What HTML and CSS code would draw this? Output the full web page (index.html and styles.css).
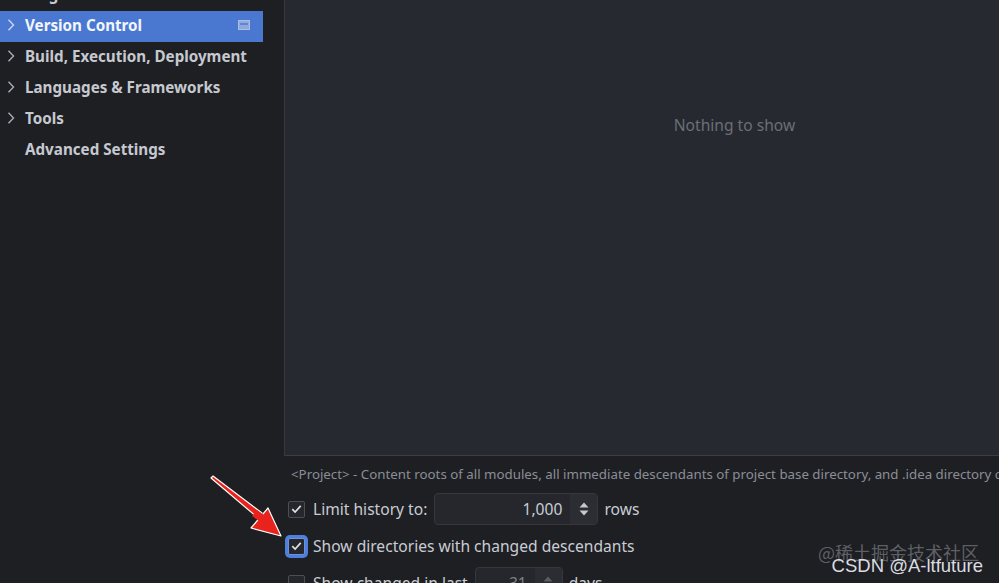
FILE: index.html
```html
<!DOCTYPE html>
<html>
<head>
<meta charset="utf-8">
<link rel="stylesheet" href="styles.css">
</head>
<body>
<div class="app">
  <aside class="sidebar">
    <ul class="tree">
      <li class="row"><span class="chev"></span><span class="label">Plugins</span></li>
      <li class="row selected">
        <svg class="chev" viewBox="0 0 8 14" width="8" height="14"><path d="M1.5 1.8l5 5.2-5 5.2" fill="none" stroke="#c8d6f2" stroke-width="1.4"/></svg>
        <span class="label">Version Control</span>
        <svg class="proj" viewBox="0 0 12 10" width="12" height="10"><rect x="0.5" y="0.5" width="11" height="9" fill="#8fa9de" stroke="#a9bde6"/><rect x="2" y="3" width="8" height="2" fill="#5f86d4"/></svg>
      </li>
      <li class="row">
        <svg class="chev" viewBox="0 0 8 14" width="8" height="14"><path d="M1.5 1.8l5 5.2-5 5.2" fill="none" stroke="#a9adb5" stroke-width="1.4"/></svg>
        <span class="label">Build, Execution, Deployment</span>
      </li>
      <li class="row">
        <svg class="chev" viewBox="0 0 8 14" width="8" height="14"><path d="M1.5 1.8l5 5.2-5 5.2" fill="none" stroke="#a9adb5" stroke-width="1.4"/></svg>
        <span class="label">Languages &amp; Frameworks</span>
      </li>
      <li class="row">
        <svg class="chev" viewBox="0 0 8 14" width="8" height="14"><path d="M1.5 1.8l5 5.2-5 5.2" fill="none" stroke="#a9adb5" stroke-width="1.4"/></svg>
        <span class="label">Tools</span>
      </li>
      <li class="row"><span class="chev"></span><span class="label">Advanced Settings</span></li>
    </ul>
  </aside>
  <main class="main">
    <section class="panel">
      <p class="empty">Nothing to show</p>
    </section>
    <div class="options">
      <p class="desc">&lt;Project&gt; - Content roots of all modules, all immediate descendants of project base directory, and .idea directory contents</p>
      <div class="opt">
        <span class="cb checked">
          <svg viewBox="0 0 16 16" width="16" height="16"><path d="M3.5 8.2l3 3 6-6.5" fill="none" stroke="#dfe1e5" stroke-width="1.8"/></svg>
        </span>
        <span class="opt-label">Limit history to:</span>
        <span class="spin">
          <span class="spin-val">1,000</span>
          <span class="spin-btn">
            <svg viewBox="0 0 12 18" width="12" height="18"><path d="M1.5 7.5L6 2.5l4.5 5z" fill="#c5c8ce"/><path d="M1.5 10.5L6 15.5l4.5-5z" fill="#c5c8ce"/></svg>
          </span>
        </span>
        <span class="opt-label unit">rows</span>
      </div>
      <div class="opt">
        <span class="cb checked focused">
          <svg viewBox="0 0 16 16" width="16" height="16"><path d="M3.5 8.2l3 3 6-6.5" fill="none" stroke="#dfe1e5" stroke-width="1.8"/></svg>
        </span>
        <span class="opt-label">Show directories with changed descendants</span>
      </div>
      <div class="opt">
        <span class="cb"></span>
        <span class="opt-label">Show changed in last</span>
        <span class="spin small">
          <span class="spin-val">31</span>
          <span class="spin-btn">
            <svg viewBox="0 0 12 18" width="12" height="18"><path d="M1.5 7.5L6 2.5l4.5 5z" fill="#5a5d63"/><path d="M1.5 10.5L6 15.5l4.5-5z" fill="#5a5d63"/></svg>
          </span>
        </span>
        <span class="opt-label unit">days</span>
      </div>
    </div>
  </main>
</div>

<svg class="arrow" viewBox="0 0 100 80" width="100" height="80">
  <path d="M13 16 L62 53 L58 58 L11 18 Z" fill="#e8231d" stroke="#ffffff" stroke-width="1.2" stroke-linejoin="round"/>
  <path d="M81 76 L51 68 L68 48 Z" fill="#e8231d" stroke="#ffffff" stroke-width="1.2" stroke-linejoin="round"/>
  <path d="M57 50 L64 55 L59 61 L52 56 Z" fill="#e8231d"/>
</svg>

<div class="watermark">
  <span class="wm-juejin">@稀土掘金技术社区</span>
  <span class="wm-csdn">CSDN @A-ltfuture</span>
</div>
</body>
</html>
```

FILE: styles.css
```css
* { box-sizing: border-box; }
html, body {
  margin: 0;
  padding: 0;
  width: 999px;
  height: 583px;
  overflow: hidden;
  background: #1e1f23;
  font-family: "Noto Sans", "Open Sans", sans-serif;
}
.app {
  display: flex;
  height: 583px;
  width: 1300px;
}
.sidebar {
  width: 284px;
  flex-shrink: 0;
  background: #1e1f23;
}
.tree {
  list-style: none;
  margin: -20px 0 0 0;
  padding: 0;
  width: 263px;
}
.row {
  height: 31px;
  display: flex;
  align-items: center;
  padding-left: 7px;
  padding-bottom: 3px;
  color: #c6c9d0;
  font-weight: 700;
  font-size: 15.2px;
}
.row .chev {
  width: 8px;
  height: 14px;
  flex-shrink: 0;
  display: inline-block;
}
.row .label {
  margin-left: 10px;
  flex: 1;
  white-space: nowrap;
}
.row.selected {
  background: #4a78d1;
  color: #f3f6fc;
}
.proj {
  margin-right: 13px;
}
.main {
  width: 900px;
  flex-shrink: 0;
  display: flex;
  flex-direction: column;
}
.panel {
  height: 456px;
  flex-shrink: 0;
  background: #262930;
  border-left: 1px solid #35383f;
  border-bottom: 1px solid #3a3d44;
  display: flex;
  justify-content: center;
  padding-top: 114px;
}
.empty {
  margin: 0;
  font-size: 15.6px;
  color: #6b6f78;
  height: 22px;
  line-height: 22px;
}
.options {
  padding-left: 4px;
  flex-shrink: 0;
}
.desc {
  margin: 9px 0 0 3px;
  font-size: 13.3px;
  line-height: 18px;
  color: #8a8e97;
  white-space: nowrap;
}
.opt {
  display: flex;
  align-items: center;
  height: 32px;
  margin-top: 10px;
  color: #c9ccd3;
  font-size: 15.6px;
  white-space: nowrap;
}
.opt + .opt {
  margin-top: 5px;
}
.cb {
  width: 17px;
  height: 17px;
  border: 1px solid #4b4e55;
  border-radius: 2px;
  background: #25272c;
  display: inline-flex;
  align-items: center;
  justify-content: center;
  flex-shrink: 0;
}
.cb svg { display: block; }
.cb.focused {
  box-shadow: 0 0 0 3px #4f7fdc;
  border-color: #6a91de;
}
.opt-label {
  margin-left: 8px;
}
.opt-label.unit {
  margin-left: 6px;
}
.spin {
  margin-left: 7px;
  width: 164px;
  height: 32px;
  border: 1px solid #35373d;
  border-radius: 4px;
  background: #25272d;
  display: flex;
  align-items: stretch;
  overflow: hidden;
}
.spin-val {
  flex: 1;
  text-align: right;
  padding-right: 8px;
  line-height: 30px;
  color: #c9ccd3;
}
.spin-btn {
  width: 27px;
  background: #2b2d33;
  display: flex;
  align-items: center;
  justify-content: center;
}
.spin.small {
  width: 88px;
}
.spin.small .spin-val {
  color: #7b7f87;
}
.arrow {
  position: absolute;
  left: 200px;
  top: 460px;
}
.watermark {
  position: absolute;
  right: 16px;
  top: 540px;
  display: flex;
  flex-direction: column;
  align-items: flex-end;
}
.wm-juejin {
  font-family: "Noto Sans CJK SC", sans-serif;
  font-size: 18px;
  line-height: 24px;
  color: rgba(150, 153, 160, 0.55);
  margin-right: 4px;
}
.wm-csdn {
  font-family: "Liberation Sans", Arial, sans-serif;
  font-size: 18.5px;
  line-height: 18px;
  margin-top: -7px;
  color: #dadce0;
}
```
